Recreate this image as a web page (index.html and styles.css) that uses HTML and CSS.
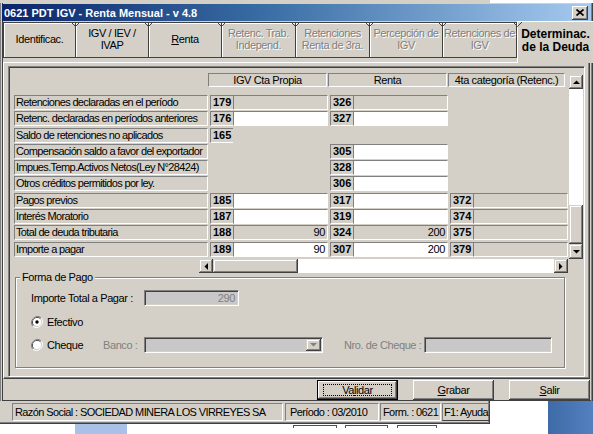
FILE: index.html
```html
<!DOCTYPE html>
<html>
<head>
<meta charset="utf-8">
<title>0621 PDT IGV - Renta Mensual</title>
<link rel="stylesheet" href="styles.css">
</head>
<body>
<div class="screen">
  <div class="topstrip"><div class="ts-gray"></div><div class="ts-white"></div></div>
  <div class="window">
    <div class="titlebar">
      <span class="title">0621 PDT IGV - Renta Mensual - v 4.8</span>
      <span class="closebtn"><svg width="8" height="7" viewBox="0 0 8 7"><path d="M0.5 0.5L7.5 6.5M7.5 0.5L0.5 6.5" stroke="#000" stroke-width="1.7"/></svg></span>
    </div>
    <div class="tabs">
      <div class="tab t1"><span>Identificac.</span></div>
      <div class="tab t2"><svg class="notch" width="9" height="6" viewBox="0 0 9 6"><polyline points="0,0 4.5,4.5 9,0" fill="none" stroke="#404040"/></svg><span>IGV / IEV /<br>IVAP</span></div>
      <div class="tab t3"><svg class="notch" width="9" height="6" viewBox="0 0 9 6"><polyline points="0,0 4.5,4.5 9,0" fill="none" stroke="#404040"/></svg><span><u>R</u>enta</span></div>
      <div class="tab t4 dis"><svg class="notch" width="9" height="6" viewBox="0 0 9 6"><polyline points="0,0 4.5,4.5 9,0" fill="none" stroke="#404040"/></svg><span>Retenc. Trab.<br>Independ.</span></div>
      <div class="tab t5 dis"><svg class="notch" width="9" height="6" viewBox="0 0 9 6"><polyline points="0,0 4.5,4.5 9,0" fill="none" stroke="#404040"/></svg><span>Retenciones<br>Renta de 3ra.</span></div>
      <div class="tab t6 dis"><svg class="notch" width="9" height="6" viewBox="0 0 9 6"><polyline points="0,0 4.5,4.5 9,0" fill="none" stroke="#404040"/></svg><span>Percepción de<br>IGV</span></div>
      <div class="tab t7 dis"><svg class="notch" width="9" height="6" viewBox="0 0 9 6"><polyline points="0,0 4.5,4.5 9,0" fill="none" stroke="#404040"/></svg><span>Retenciones de<br>IGV</span></div>
      <div class="tab active"><svg class="notch" width="9" height="6" viewBox="0 0 9 6"><polyline points="0,0 4.5,4.5 9,0" fill="none" stroke="#404040"/></svg><span>Determinac.<br>de la Deuda</span></div>
    </div>
    <div class="panel">
      <div class="inner">
        <div class="gridarea">
          <div class="grid">
            <div class="hdr">
              <div class="hcell">IGV Cta Propia</div>
              <div class="hcell">Renta</div>
              <div class="hcell h3">4ta categoría (Retenc.)</div>
            </div>
            <div class="rows">
              <div class="row">
                <div class="lbl">Retenciones declaradas en el período</div>
                <div class="col"><div class="code">179</div><div class="fld"></div></div>
                <div class="col"><div class="code">326</div><div class="fld"></div></div>
              </div>
              <div class="row">
                <div class="lbl">Retenc. declaradas en períodos anteriores</div>
                <div class="col"><div class="code">176</div><div class="fld w"></div></div>
                <div class="col"><div class="code">327</div><div class="fld w"></div></div>
              </div>
              <div class="row">
                <div class="lbl">Saldo de retenciones no aplicados</div>
                <div class="col"><div class="code">165</div></div>
              </div>
              <div class="row">
                <div class="lbl">Compensación saldo a favor del exportador</div>
                <div class="col"></div>
                <div class="col"><div class="code">305</div><div class="fld w"></div></div>
              </div>
              <div class="row">
                <div class="lbl">Impues.Temp.Activos Netos(Ley N°28424)</div>
                <div class="col"></div>
                <div class="col"><div class="code">328</div><div class="fld w"></div></div>
              </div>
              <div class="row">
                <div class="lbl">Otros créditos permitidos por ley.</div>
                <div class="col"></div>
                <div class="col"><div class="code">306</div><div class="fld w"></div></div>
              </div>
              <div class="row">
                <div class="lbl">Pagos previos</div>
                <div class="col"><div class="code">185</div><div class="fld w"></div></div>
                <div class="col"><div class="code">317</div><div class="fld w"></div></div>
                <div class="col"><div class="code">372</div><div class="fld"></div></div>
              </div>
              <div class="row">
                <div class="lbl">Interés Moratorio</div>
                <div class="col"><div class="code">187</div><div class="fld w"></div></div>
                <div class="col"><div class="code">319</div><div class="fld w"></div></div>
                <div class="col"><div class="code">374</div><div class="fld"></div></div>
              </div>
              <div class="row">
                <div class="lbl">Total de deuda tributaria</div>
                <div class="col"><div class="code">188</div><div class="fld">90</div></div>
                <div class="col"><div class="code">324</div><div class="fld">200</div></div>
                <div class="col"><div class="code">375</div><div class="fld"></div></div>
              </div>
              <div class="row">
                <div class="lbl">Importe a pagar</div>
                <div class="col"><div class="code">189</div><div class="fld w">90</div></div>
                <div class="col"><div class="code">307</div><div class="fld w">200</div></div>
                <div class="col"><div class="code">379</div><div class="fld"></div></div>
              </div>
            </div>
          </div>
          <div class="vscroll">
            <div class="sbtn"><svg width="7" height="4" viewBox="0 0 7 4"><path d="M0 4H7L3.5 0.5Z" fill="#000"/></svg></div>
            <div class="vtrack"></div>
            <div class="vthumb"></div>
            <div class="sbtn"><svg width="7" height="4" viewBox="0 0 7 4"><path d="M0 0H7L3.5 3.5Z" fill="#000"/></svg></div>
          </div>
        </div>
        <div class="hscroll">
          <div class="sbtn"><svg width="4" height="7" viewBox="0 0 4 7"><path d="M4 0V7L0.5 3.5Z" fill="#000"/></svg></div>
          <div class="hthumb"></div>
          <div class="htrack"></div>
          <div class="sbtn"><svg width="4" height="7" viewBox="0 0 4 7"><path d="M0 0V7L3.5 3.5Z" fill="#000"/></svg></div>
        </div>
        <div class="group">
          <span class="legend">Forma de Pago</span>
          <div class="g-row g1">
            <span class="g-lbl1">Importe Total a Pagar :</span>
            <div class="dfld f290">290</div>
          </div>
          <div class="g-row g2">
            <svg class="radio" width="12" height="12" viewBox="0 0 12 12">
              <path d="M1.8 10.2A6 6 0 0 1 10.2 1.8" stroke="#808080" fill="none"/>
              <path d="M10.2 1.8A6 6 0 0 1 1.8 10.2" stroke="#fff" fill="none"/>
              <path d="M2.5 9.5A5 5 0 0 1 9.5 2.5" stroke="#404040" fill="none"/>
              <path d="M9.5 2.5A5 5 0 0 1 2.5 9.5" stroke="#d4d0c8" fill="none"/>
              <circle cx="6" cy="6" r="4" fill="#fff"/>
              <circle cx="6" cy="6" r="1.7" fill="#000"/>
            </svg>
            <span class="rlbl">Efectivo</span>
          </div>
          <div class="g-row g3">
            <div class="rc">
              <svg class="radio" width="12" height="12" viewBox="0 0 12 12">
                <path d="M1.8 10.2A6 6 0 0 1 10.2 1.8" stroke="#808080" fill="none"/>
                <path d="M10.2 1.8A6 6 0 0 1 1.8 10.2" stroke="#fff" fill="none"/>
                <path d="M2.5 9.5A5 5 0 0 1 9.5 2.5" stroke="#404040" fill="none"/>
                <path d="M9.5 2.5A5 5 0 0 1 2.5 9.5" stroke="#d4d0c8" fill="none"/>
                <circle cx="6" cy="6" r="4" fill="#fff"/>
              </svg>
              <span class="rlbl">Cheque</span>
            </div>
            <span class="glbl banco">Banco :</span>
            <div class="dfld combo"><div class="ddbtn"><svg width="7" height="4" viewBox="0 0 7 4"><path d="M0 0H7L3.5 3.5Z" fill="#808080"/></svg></div></div>
            <span class="glbl nro">Nro. de Cheque :</span>
            <div class="dfld cheq"></div>
          </div>
        </div>
      </div>
    </div>
    <div class="btnrow">
      <div class="btn default"><span class="focus">Va<u>l</u>idar</span></div>
      <div class="btn"><span><u>G</u>rabar</span></div>
      <div class="btn"><span><u>S</u>alir</span></div>
    </div>
  </div>
  <div class="statusrow">
    <div class="statusbar">
      <div class="sp sp1">Razón Social : SOCIEDAD MINERA LOS VIRREYES SA</div>
      <div class="sp sp2">Período : 03/2010</div>
      <div class="sp sp3">Form. : 0621</div>
      <div class="sp sp4">F1: Ayuda</div>
    </div>
    <div class="whitegap"></div>
    <div class="desk"></div>
  </div>
  <div class="bottomrow">
    <div class="bleft">
      <div class="blob"></div>
      <div class="seg s1"></div>
      <div class="seg s2"></div>
      <div class="seg s3"></div>
    </div>
    <div class="desk"></div>
  </div>
</div>
</body>
</html>
```

FILE: styles.css
```css
* { box-sizing: border-box; }
html, body { margin: 0; padding: 0; background: #fff; }

.screen {
  width: 593px;
  height: 434px;
  overflow: hidden;
  background: #fff;
  font-family: "Liberation Sans", Arial, sans-serif;
  font-size: 11px;
  color: #000;
  letter-spacing: -0.4px;
}

.topstrip { display: flex; height: 3px; }
.ts-gray { width: 490px; background: #d4d0c8; }
.ts-white { flex: 1; background: #fff; }

.window {
  height: 398px;
  background: #d4d0c8;
  padding: 1px 3px 0 3px;
  display: flex;
  flex-direction: column;
  box-shadow: inset 1px 0 #808080, inset 2px 0 #d4d0c8, inset 3px 0 #404040, inset -1px 0 #404040, inset -2px 0 #808080, inset 0 -1px #404040;
}

.titlebar {
  height: 17px;
  margin: 0 -1px;
  padding: 0 3px 0 2px;
  display: flex;
  align-items: center;
  justify-content: space-between;
  background: linear-gradient(90deg, #0a246a 0%, #3a6ea5 45%, #a6caf0 100%);
  color: #fff;
  font-weight: bold;
  letter-spacing: 0;
}
.closebtn {
  width: 16px;
  height: 14px;
  background: #d4d0c8;
  display: flex;
  align-items: center;
  justify-content: center;
  box-shadow: inset -1px -1px #404040, inset 1px 1px #fff, inset -2px -2px #808080;
}

.tabs {
  height: 41px;
  display: flex;
  align-items: flex-start;
  flex-shrink: 0;
}
.tab {
  position: relative;
  flex-shrink: 0;
  width: 73px;
  height: 36px;
  margin-top: 1px;
  border: 1px solid #404040;
  border-left: 0;
  display: flex;
  align-items: center;
  justify-content: center;
  text-align: center;
  line-height: 12px;
  padding-bottom: 2px;
  box-shadow: inset 1px 1px #fff;
  white-space: nowrap;
}
.tab.t1 { border-left: 1px solid #404040; }
.tab.t4, .tab.t5, .tab.t7 { width: 74px; }
.tab.dis { color: #808080; text-shadow: 1px 1px 0 #fff; }
.notch { position: absolute; left: -5px; top: -1px; }
.tab.active {
  width: 76px;
  height: 42px;
  margin-top: 0;
  border: 0;
  border-top: 1px solid #fff;
  border-left: 1px solid #fff;
  box-shadow: none;
  background: #d4d0c8;
  z-index: 1;
  align-items: flex-start;
  padding-top: 6px;
  font-weight: bold;
  font-size: 12px;
  letter-spacing: 0;
  line-height: 13px;
}
.tab.active .notch { top: 0; left: -5px; }

.panel {
  height: 317px;
  flex-shrink: 0;
  border: 1px solid;
  border-color: #fff #404040 #404040 #fff;
  box-shadow: inset -1px -1px #808080;
  padding: 3px 4px 1px 4px;
}
.inner {
  height: 311px;
  border: 1px solid;
  border-color: #808080 #fff #fff #808080;
  box-shadow: inset 1px 1px #404040, inset -1px -1px #d4d0c8;
  padding: 1px;
}

.gridarea {
  display: flex;
  align-items: flex-start;
  margin-top: 5px;
  padding-left: 4px;
}
.grid { width: 554px; flex-shrink: 0; }
.hdr { display: flex; height: 14px; margin-left: 194px; }
.hcell {
  width: 119px;
  height: 14px;
  margin-right: 1px;
  border: 1px solid;
  border-color: #808080 #fff #fff #808080;
  text-align: center;
  line-height: 12px;
  white-space: nowrap;
}
.hcell.h3 { width: 117px; margin-right: 0; }

.rows { margin-top: 8px; }
.row { display: flex; height: 16.3px; align-items: flex-start; }
.lbl {
  width: 194px;
  height: 15px;
  flex-shrink: 0;
  border: 1px solid;
  border-color: #808080 #fff #fff #808080;
  padding-left: 1px;
  line-height: 13px;
  letter-spacing: -0.65px;
  white-space: nowrap;
  overflow: hidden;
}
.col { width: 120px; flex-shrink: 0; display: flex; padding-left: 2px; }
.code {
  width: 23px;
  height: 15px;
  border-top: 1px solid #808080;
  border-left: 1px solid #808080;
  border-bottom: 1px solid #fff;
  padding-left: 2px;
  font-weight: bold;
  line-height: 13px;
  letter-spacing: 0;
}
.fld {
  width: 95px;
  height: 15px;
  border: 1px solid;
  border-color: #808080 #fff #fff #808080;
  text-align: right;
  padding-right: 2px;
  line-height: 13px;
}
.fld.w { background: #fff; }

.sbtn {
  width: 14px;
  height: 14px;
  flex-shrink: 0;
  background: #d4d0c8;
  display: flex;
  align-items: center;
  justify-content: center;
  box-shadow: inset -1px -1px #404040, inset 1px 1px #d4d0c8, inset -2px -2px #808080, inset 2px 2px #fff;
}
.vscroll {
  width: 14px;
  height: 184px;
  margin-left: 1px;
  margin-top: 2px;
  display: flex;
  flex-direction: column;
  background: #fff;
}
.vtrack { height: 116px; flex-shrink: 0; }
.vthumb {
  height: 39px;
  flex-shrink: 0;
  background: #d4d0c8;
  box-shadow: inset -1px -1px #404040, inset 1px 1px #d4d0c8, inset -2px -2px #808080, inset 2px 2px #fff;
}
.vscroll .sbtn:last-child { height: 15px; }

.hscroll {
  margin-left: 189px;
  width: 369px;
  height: 14px;
  display: flex;
  background: #fff;
}
.hthumb {
  width: 85px;
  background: #d4d0c8;
  box-shadow: inset -1px -1px #404040, inset 1px 1px #d4d0c8, inset -2px -2px #808080, inset 2px 2px #fff;
}
.htrack { flex: 1; }

.group {
  margin: 4px 0 0 5px;
  width: 550px;
  height: 91px;
  border: 1px solid #808080;
  box-shadow: inset 1px 1px #fff, 1px 1px #fff;
}
.legend {
  display: block;
  width: max-content;
  margin: -7px 0 0 4px;
  padding: 0 2px;
  background: #d4d0c8;
  line-height: 12px;
}
.g-row {
  display: flex;
  align-items: center;
  height: 16px;
  padding-left: 15px;
}
.g1 { margin-top: 7px; }
.g2 { margin-top: 8px; }
.g3 { margin-top: 7px; }
.g-lbl1 { width: 113px; }
.dfld {
  height: 16px;
  background: #c8c8c8;
  border: 1px solid;
  border-color: #808080 #fff #fff #808080;
  box-shadow: inset 1px 1px #404040, inset -1px -1px #d4d0c8;
  color: #808080;
  text-align: right;
  line-height: 14px;
  padding-right: 3px;
}
.f290 { width: 95px; }
.radio { display: block; flex-shrink: 0; }
.rlbl { margin-left: 4px; }
.rc { width: 72px; display: flex; align-items: center; }
.glbl { color: #808080; white-space: nowrap; }
.banco { width: 41px; }
.combo {
  width: 179px;
  display: flex;
  justify-content: flex-end;
  padding: 1px;
}
.ddbtn {
  width: 15px;
  height: 12px;
  background: #d4d0c8;
  display: flex;
  align-items: center;
  justify-content: center;
  box-shadow: inset -1px -1px #404040, inset 1px 1px #d4d0c8, inset -2px -2px #808080, inset 2px 2px #fff;
}
.nro { width: 80px; margin-left: 21px; }
.cheq { width: 128px; }

.btnrow {
  display: flex;
  justify-content: flex-end;
  gap: 15px;
  margin-top: 1px;
  padding-right: 0;
}
.btn {
  width: 81px;
  height: 20px;
  display: flex;
  align-items: center;
  justify-content: center;
  background: #d4d0c8;
  box-shadow: inset -1px -1px #404040, inset 1px 1px #fff, inset -2px -2px #808080, inset 2px 2px #d4d0c8;
}
.btn.default {
  border: 1px solid #000;
  box-shadow: inset -1px -1px #404040, inset 1px 1px #fff, inset -2px -2px #808080;
}
.focus {
  width: 69px;
  height: 12px;
  border: 1px dotted #000;
  display: flex;
  align-items: center;
  justify-content: center;
  line-height: 10px;
}

.statusrow { display: flex; height: 23px; }
.statusbar {
  width: 490px;
  flex-shrink: 0;
  display: flex;
  padding: 2px 0 0 12px;
  background: #d4d0c8;
  box-shadow: inset -1px -1px #404040, inset -2px -2px #808080;
}
.sp {
  height: 18px;
  border: 1px solid;
  border-color: #808080 #fff #fff #808080;
  line-height: 16px;
  padding-left: 2px;
  letter-spacing: -0.6px;
  white-space: nowrap;
  overflow: hidden;
}
.sp1 { width: 271px; }
.sp2 { width: 94px; margin-left: 2px; padding-left: 4px; }
.sp3 { width: 61px; margin-left: 1px; }
.sp4 { width: 48px; margin-left: 1px; padding-left: 1px; border-right-color: #404040; border-bottom-color: #404040; }
.whitegap { width: 58px; background: #fff; }
.desk { flex: 1; background: linear-gradient(90deg, #3f6aa8, #5580c0); }

.bottomrow { display: flex; height: 10px; }
.bleft { width: 548px; display: flex; background: #fff; align-items: flex-start; }
.blob { width: 52px; height: 10px; margin-left: 75px; background: #a9c1e6; }
.seg { height: 3px; margin-top: 1px; border-top: 1px solid #505050; border-left: 1px solid #505050; border-right: 1px solid #505050; }
.s1 { width: 44px; margin-left: 166px; }
.s2 { width: 43px; margin-left: 8px; }
.s3 { width: 40px; margin-left: 9px; }
```
